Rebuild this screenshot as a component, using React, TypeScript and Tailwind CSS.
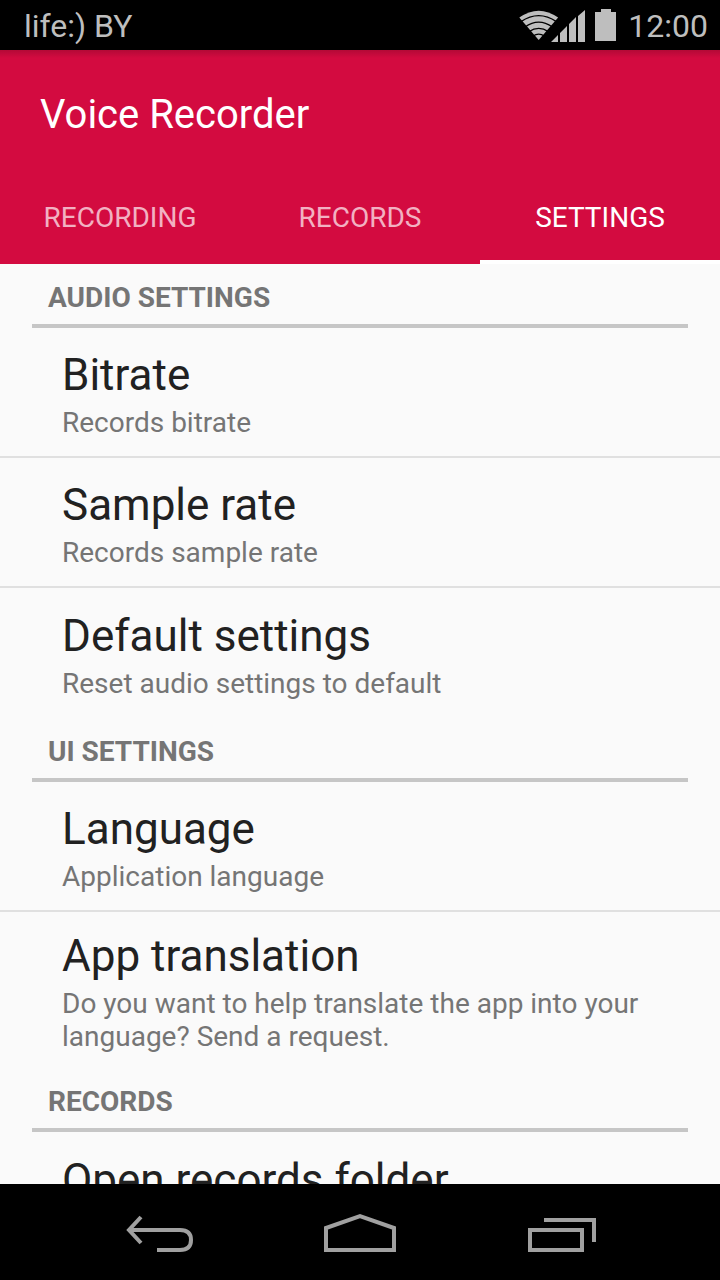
import React from "react";

type Item = { title: string; summary: string };
type Section = { heading: string; items: Item[] };

const sections: Section[] = [
  {
    heading: "AUDIO SETTINGS",
    items: [
      { title: "Bitrate", summary: "Records bitrate" },
      { title: "Sample rate", summary: "Records sample rate" },
      { title: "Default settings", summary: "Reset audio settings to default" },
    ],
  },
  {
    heading: "UI SETTINGS",
    items: [
      { title: "Language", summary: "Application language" },
      {
        title: "App translation",
        summary: "Do you want to help translate the app into your language? Send a request.",
      },
    ],
  },
  { heading: "RECORDS", items: [{ title: "Open records folder", summary: "" }] },
];

const tabs = ["RECORDING", "RECORDS", "SETTINGS"];

function StatusBar() {
  return (
    <div className="flex h-[50px] shrink-0 items-center justify-between bg-black pt-px pr-3 pl-6 text-[32px] text-[#bebebe]">
      <span>life:) BY</span>
      <div className="flex items-center">
        <svg width="66" height="34" viewBox="519 8 66 34" fill="none" stroke="#bebebe" aria-hidden="true">
          <path d="M519.3 16.6Q538.7 2.8 558.1 16.6L538.7 39Z" fill="#bebebe" stroke="none" />
          <path
            d="M521 20.6Q538.7 8.6 556.4 20.6M525 26Q538.7 16.4 552.4 26M529 30.6Q538.7 24 548.4 30.6M533 35Q538.7 31.2 544.4 35"
            stroke="#000"
            strokeWidth="1.3"
          />
          <path
            d="M551 41L558 34V41ZM560 41V32L567 25V41ZM569 41V23L576 16V41ZM578 41V15L585 9V41Z"
            fill="#bebebe"
            stroke="none"
          />
        </svg>
        <svg className="ml-[10px]" width="21" height="34" viewBox="595 8 21 34" fill="#bebebe" aria-hidden="true">
          <path d="M601 8H611V11H616V40H595V11H601Z" />
        </svg>
        <span className="ml-3">12:00</span>
      </div>
    </div>
  );
}

export default function App() {
  return (
    <div className="flex h-screen flex-col overflow-hidden bg-[#fafafa] font-['Roboto',sans-serif]">
      <StatusBar />
      <header className="shrink-0 bg-[#d30b40] text-white">
        <div className="h-2 bg-linear-to-b from-black/15 to-transparent" />
        <h1 className="px-10 pt-[33px] pb-[35px] text-[40px] leading-12">Voice Recorder</h1>
        <nav className="grid grid-cols-3">
          {tabs.map((tab, i) => (
            <button
              key={tab}
              className={
                i === 2
                  ? "h-[90px] border-b-4 border-white pt-0.5 text-[28px] text-white"
                  : "h-[90px] border-b-4 border-transparent pt-0.5 text-[28px] text-[#f2b1c2]"
              }
            >
              {tab}
            </button>
          ))}
        </nav>
      </header>
      <main className="min-h-0 flex-1 overflow-hidden">
        {sections.map((section) => (
          <section key={section.heading}>
            <h2 className="mx-8 border-b-4 border-[#c6c6c6] px-4 pt-[18px] pb-[10px] text-[28px] leading-8 font-bold text-[#757575]">
              {section.heading}
            </h2>
            {section.items.map((item) => (
              <button
                key={item.title}
                className="flex min-h-[130px] w-full flex-col justify-center border-b-2 border-[#e0e0e0] px-[62px] pt-[18px] pb-[14px] text-left last:border-transparent last:pb-[13px]"
              >
                <span className="text-[44px] leading-[52px] text-[#212121]">{item.title}</span>
                <span className="mt-[5px] min-h-[33px] text-[28px] leading-[33px] text-[#757575]">{item.summary}</span>
              </button>
            ))}
          </section>
        ))}
      </main>
      <nav className="flex h-24 shrink-0 items-center justify-center gap-[120px] bg-black" aria-label="System">
        <button aria-label="Back">
          <svg width="80" height="64" viewBox="120 1200 80 64" fill="none" stroke="#a0a0a0" strokeWidth="4">
            <path d="M141 1217L129 1230L141 1243M129 1230H180Q191 1230 191 1240Q191 1250 180 1250H157" />
          </svg>
        </button>
        <button aria-label="Home">
          <svg width="80" height="64" viewBox="320 1200 80 64" fill="none" stroke="#a0a0a0" strokeWidth="4">
            <path d="M326 1250V1228L360 1216L394 1228V1250Z" />
          </svg>
        </button>
        <button aria-label="Recent apps">
          <svg width="80" height="64" viewBox="520 1200 80 64" fill="none" stroke="#a0a0a0" strokeWidth="4">
            <path d="M530 1230H582V1250H530ZM544 1220H594V1242" />
          </svg>
        </button>
      </nav>
    </div>
  );
}
